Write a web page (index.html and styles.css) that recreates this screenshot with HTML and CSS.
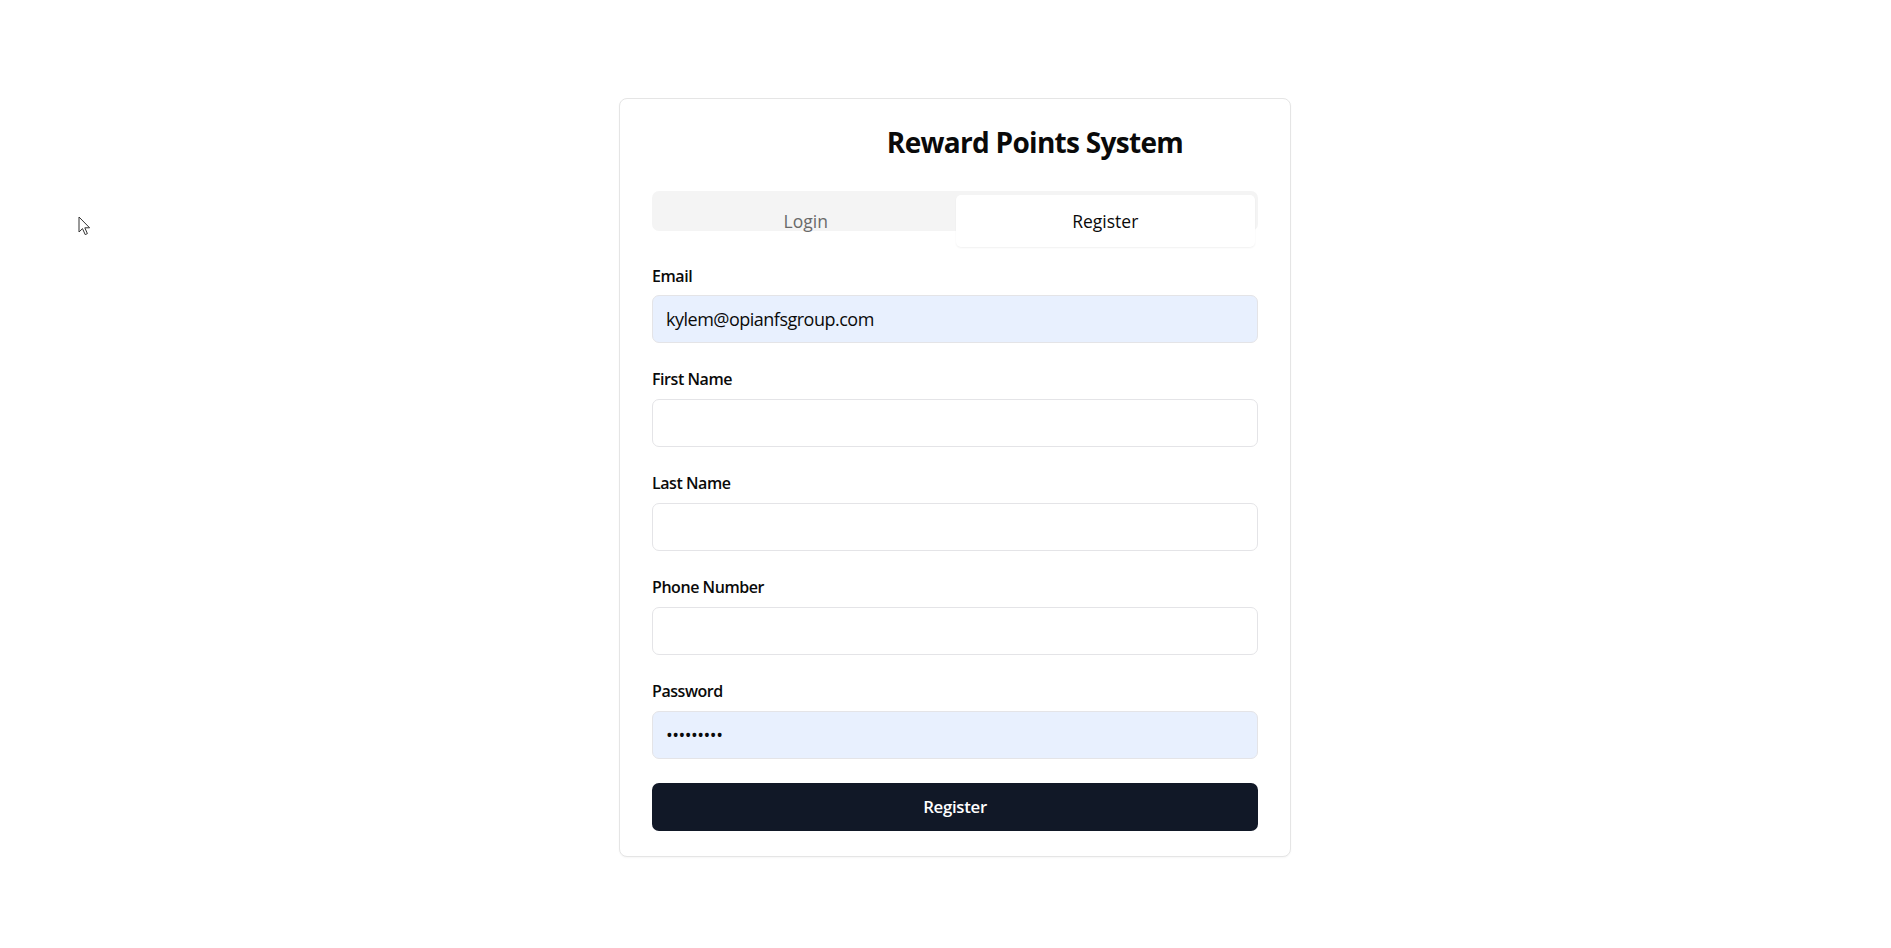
FILE: index.html
```html
<!DOCTYPE html>
<html lang="en">
<head>
<meta charset="utf-8">
<title>Reward Points System</title>
<link rel="stylesheet" href="styles.css">
</head>
<body>
<div class="page">
  <div class="card">
    <div class="header">
      <div class="logo-slot"></div>
      <h1 class="title">Reward Points System</h1>
    </div>
    <div class="tablist">
      <button class="tab">Login</button>
      <button class="tab active">Register</button>
    </div>
    <form class="form">
      <div class="field">
        <label class="label" for="email">Email</label>
        <input class="input autofill" id="email" type="email" value="kylem@opianfsgroup.com">
      </div>
      <div class="field">
        <label class="label" for="first">First Name</label>
        <input class="input" id="first" type="text">
      </div>
      <div class="field">
        <label class="label" for="last">Last Name</label>
        <input class="input" id="last" type="text">
      </div>
      <div class="field">
        <label class="label" for="phone">Phone Number</label>
        <input class="input" id="phone" type="tel">
      </div>
      <div class="field">
        <label class="label" for="pw">Password</label>
        <input class="input autofill" id="pw" type="password" value="123456789">
      </div>
      <button class="submit" type="button">Register</button>
    </form>
  </div>
</div>
<svg class="cursor" width="13" height="20" viewBox="0 0 13 20" xmlns="http://www.w3.org/2000/svg">
  <path d="M1 1 L1 16 L4.5 12.6 L7.2 18.6 L9.4 17.6 L6.8 11.8 L11.6 11.8 Z" fill="#ffffff" stroke="#333333" stroke-width="1" stroke-linejoin="round"/>
</svg>
</body>
</html>
```

FILE: styles.css
```css
* { box-sizing: border-box; }

html, body {
  margin: 0;
  padding: 0;
  background: #ffffff;
}

body {
  font-family: "Open Sans", "Noto Sans", sans-serif;
  color: #0a0a0a;
  width: 1891px;
  height: 948px;
  overflow: hidden;
}

.page {
  display: flex;
  justify-content: center;
  padding: 98px 0 0 19px;
}

.card {
  width: 672px;
  border: 1px solid #e5e5e5;
  border-radius: 8px;
  padding: 0 32px 25px;
  background: #ffffff;
  box-shadow: 0 1px 2px rgba(0, 0, 0, 0.04);
}

.header {
  display: flex;
  padding-top: 26px;
}

.logo-slot {
  width: 160px;
  flex: none;
}

.title {
  flex: 1;
  margin: 0;
  text-align: center;
  font-size: 28px;
  line-height: 34.56px;
  font-weight: 700;
  letter-spacing: -0.7px;
}

.tablist {
  margin-top: 31px;
  height: 40px;
  background: #f4f4f4;
  border-radius: 7px;
  padding: 4px 3px 0 4px;
  display: grid;
  grid-template-columns: 1fr 1fr;
  align-items: start;
}

.tab {
  height: 52px;
  border: 0;
  background: transparent;
  font-family: inherit;
  font-size: 17.5px;
  font-weight: 500;
  color: #696969;
  border-radius: 5px;
  padding: 0;
}

.tab.active {
  background: #ffffff;
  color: #0a0a0a;
  box-shadow: 0 1px 2px rgba(0, 0, 0, 0.06);
}

.form {
  margin: 35px 0 0;
  display: flex;
  flex-direction: column;
  gap: 26px;
}

.field {
  display: flex;
  flex-direction: column;
  gap: 9px;
}

.label {
  font-size: 16px;
  line-height: 20.8px;
  font-weight: 600;
  color: #0a0a0a;
  letter-spacing: -0.45px;
}

.input {
  height: 48px;
  width: 100%;
  border: 1px solid #e4e4e7;
  border-radius: 7px;
  padding: 0 13px;
  font-family: inherit;
  font-size: 18px;
  color: #0a0a0a;
  background: #ffffff;
  outline: none;
  letter-spacing: -0.5px;
}

.input.autofill {
  background: #e8f0fe;
}

.submit {
  margin-top: -2px;
  height: 48px;
  width: 100%;
  border: 0;
  border-radius: 7px;
  background: #111827;
  color: #ffffff;
  font-family: inherit;
  font-size: 16.8px;
  font-weight: 600;
  letter-spacing: -0.3px;
}

.cursor {
  position: absolute;
  left: 78px;
  top: 216px;
}
```
